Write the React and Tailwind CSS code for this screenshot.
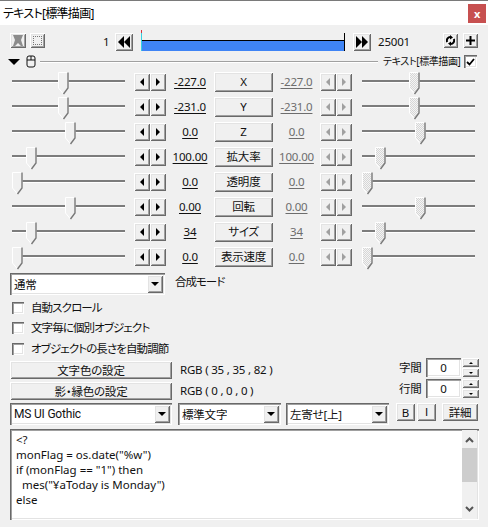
const raised = "bg-[#f0f0f0] shadow-[inset_1px_1px_0_#ffffff,inset_-1px_-1px_0_#696969,inset_2px_2px_0_#e3e3e3,inset_-2px_-2px_0_#a0a0a0]";
const sunken = "bg-white shadow-[inset_1px_1px_0_#696969,inset_2px_2px_0_#a0a0a0,inset_-1px_-1px_0_#ffffff,inset_-2px_-2px_0_#e3e3e3]";

function Tri({ dir, s = 5, color = "#000" }) {
  const pts = {
    left: `${s},0 ${s},${s * 2} 0,${s}`,
    right: `0,0 0,${s * 2} ${s},${s}`,
    down: `0,0 ${s * 2},0 ${s},${s}`,
    up: `0,${s} ${s * 2},${s} ${s},0`,
  }[dir];
  const w = dir === "left" || dir === "right" ? s : s * 2;
  const h = dir === "left" || dir === "right" ? s * 2 : s;
  return (
    <svg width={w} height={h} viewBox={`0 0 ${w} ${h}`} className="block">
      <polygon points={pts} fill={color} />
    </svg>
  );
}

function Spin({ off }) {
  const c = off ? "#a0a0a0" : "#000";
  return (
    <div className="flex h-[18px] w-[32px]">
      <div className={`flex w-[16px] items-center justify-center ${raised}`}><Tri dir="left" s={4} color={c} /></div>
      <div className={`flex w-[16px] items-center justify-center ${raised}`}><Tri dir="right" s={4} color={c} /></div>
    </div>
  );
}

function Slider({ at, off }) {
  return (
    <div className="relative h-[25px] w-[113px]">
      <div className="absolute left-0 right-0 top-[11px] h-[3px] border-b border-b-white bg-[#7c7c7c]" />
      <svg width="11" height="23" viewBox="0 0 11 23" className="absolute top-[3px]" style={{ left: at }}>
        <defs>
          <pattern id="dither" width="2" height="2" patternUnits="userSpaceOnUse">
            <rect width="2" height="2" fill="#f4f4f4" />
            <rect width="1" height="1" fill="#d6d6d6" />
            <rect x="1" y="1" width="1" height="1" fill="#d6d6d6" />
          </pattern>
        </defs>
        <path d="M.5.5H10V16L5.5 22 .5 16Z" fill={off ? "url(#dither)" : "#f0f0f0"} stroke="#fff" />
        <path d="M10 .5V16L5.5 22" fill="none" stroke="#777" strokeWidth="1.4" />
      </svg>
    </div>
  );
}

const rows = [
  ["-227.0", "X", "-227.0", 46, 47],
  ["-231.0", "Y", "-231.0", 46, 47],
  ["0.0", "Z", "0.0", 53, 53],
  ["100.00", "拡大率", "100.00", 14, 13],
  ["0.0", "透明度", "0.0", 0, 0],
  ["0.00", "回転", "0.00", 53, 53],
  ["34", "サイズ", "34", 14, 13],
  ["0.0", "表示速度", "0.0", 0, 0],
];

function Select({ w, text, font = "" }) {
  return (
    <div className={`flex h-[22px] items-center justify-between pl-[4px] pr-[2px] ${sunken} ${w}`}>
      <span className={`truncate ${font}`}>{text}</span>
      <div className={`flex h-[18px] w-[16px] items-center justify-center ${raised}`}><Tri dir="down" s={4} /></div>
    </div>
  );
}

function Check({ label, mt }) {
  return (
    <div className={`flex items-center pl-[12px] ${mt}`}>
      <div className={`h-[12px] w-[12px] ${sunken}`} />
      <span className="ml-[7px] tracking-[-0.9px]">{label}</span>
    </div>
  );
}

function NumBox() {
  return (
    <div className="ml-[5px] flex h-[19px]">
      <div className={`flex w-[35px] items-center justify-center ${sunken}`}>0</div>
      <div className="ml-[1px] flex w-[17px] flex-col">
        <div className={`flex h-[9px] items-center justify-center ${raised}`}><Tri dir="up" s={2} /></div>
        <div className={`mt-[1px] flex h-[9px] items-center justify-center ${raised}`}><Tri dir="down" s={2} /></div>
      </div>
    </div>
  );
}

export default function App() {
  return (
    <div className="h-[527px] w-[488px] overflow-hidden bg-[#f0f0f0] text-[11.5px] leading-[15px] tracking-[-0.2px] text-[#111] [font-feature-settings:'palt'] font-['Noto_Sans','Noto_Sans_CJK_JP',sans-serif]">
      <div className="flex h-[25px] items-center justify-between border-t border-[#7a7a7a] bg-white pl-[3px] pr-[2px]">
        <span className="text-[12px] tracking-[-0.7px] text-black">テキスト[標準描画]</span>
        <div className="flex h-[19px] w-[18px] items-center justify-center bg-[#c75050] text-[11px] font-bold text-white">x</div>
      </div>

      <div className="mt-[8px] flex h-[18px] items-start">
        <div className={`ml-[10px] flex h-[15px] w-[16px] items-center justify-center ${raised}`}>
          <svg width="12" height="11" viewBox="0 0 12 11"><path d="M1 0H11L9 5 11 11H9L6 8 3 11H1L3 5Z" fill="#8c8c8c" /></svg>
        </div>
        <div className={`ml-[4px] flex h-[15px] w-[15px] items-center justify-center ${raised}`}>
          <div className="h-[9px] w-[9px] border border-dotted border-[#777]" />
        </div>
        <span className="ml-[58px] mt-[1px] w-[5px]">1</span>
        <div className={`ml-[7px] flex h-[18px] w-[18px] items-center justify-center ${raised}`}>
          <Tri dir="left" s={6} /><Tri dir="left" s={6} />
        </div>
        <div className="relative ml-[8px] h-[18px] w-[204px] border-r border-black">
          <div className="mt-[7px] h-[11px] border-t border-black bg-[#3f84f5]" />
          <div className="absolute left-0 top-0 h-[18px] w-[1px] bg-[#35d0e0]" />
          <div className="absolute left-0 top-[-3px] h-[3px] w-[1px] bg-[#d8323c]" />
        </div>
        <div className={`ml-[8px] flex h-[18px] w-[18px] items-center justify-center ${raised}`}>
          <Tri dir="right" s={6} /><Tri dir="right" s={6} />
        </div>
        <span className="ml-[7px] mt-[1px] w-[65px]">25001</span>
        <div className={`flex h-[15px] w-[15px] items-center justify-center ${raised}`}>
          <svg width="9" height="11" viewBox="0 0 9 11">
            <path d="M1.2 7A3.4 3.4 0 0 1 5 2.2M7.8 4A3.4 3.4 0 0 1 4 8.8" fill="none" stroke="#000" strokeWidth="2" />
            <path d="M4 0L7 2.4 4 4.6ZM5 6.4L2 8.6 5 11Z" fill="#000" />
          </svg>
        </div>
        <div className={`ml-[5px] flex h-[15px] w-[15px] items-center justify-center ${raised}`}>
          <svg width="9" height="9" viewBox="0 0 9 9"><path d="M3.5 0H5.5V3.5H9V5.5H5.5V9H3.5V5.5H0V3.5H3.5Z" fill="#000" /></svg>
        </div>
      </div>

      <div className="mt-[3px] flex h-[15px] items-center">
        <div className="ml-[8px]"><Tri dir="down" s={6} /></div>
        <svg width="10" height="13" viewBox="0 0 10 13" className="ml-[6px]">
          <path d="M1 5V10Q1 12 3 12H7Q9 12 9 10V5ZM1 5V3Q1 1 3 1H7Q9 1 9 3V5M5 1V5" fill="none" stroke="#111" />
        </svg>
        <div className="ml-[4px] h-[2px] w-[338px] border-t border-b border-t-[#a0a0a0] border-b-white" />
        <span className="ml-[5px] w-[81px] whitespace-nowrap text-[10px] tracking-[-0.4px]">テキスト[標準描画]</span>
        <div className={`flex h-[13px] w-[13px] items-center justify-center ${sunken}`}>
          <svg width="9" height="8" viewBox="0 0 9 8"><path d="M1 4L3.5 6.5 8 1" fill="none" stroke="#000" strokeWidth="1.8" /></svg>
        </div>
      </div>

      <div className="flex flex-col">
        {rows.map(([a, label, b, l, r]) => (
          <div key={label} className="flex h-[25px] items-center pl-[12px]">
            <Slider at={l} />
            <div className="ml-[9px]"><Spin /></div>
            <span className="w-[48px] text-center underline underline-offset-2">{a}</span>
            <div className={`flex h-[20px] w-[59px] items-center justify-center ${raised}`}>{label}</div>
            <span className="w-[47px] text-center text-[#6d6d6d] underline underline-offset-2">{b}</span>
            <Spin off />
            <div className="ml-[10px]"><Slider at={r} off /></div>
          </div>
        ))}
      </div>

      <div className="mt-[4px] flex items-center pl-[10px]">
        <Select w="w-[155px]" text="通常" />
        <span className="mb-[5px] ml-[10px] tracking-[-1px]">合成モード</span>
      </div>

      <Check label="自動スクロール" mt="mt-[5px]" />
      <Check label="文字毎に個別オブジェクト" mt="mt-[5px]" />
      <Check label="オブジェクトの長さを自動調節" mt="mt-[6px]" />

      <div className="mt-[2px] flex h-[42px] pl-[10px]">
        <div className="flex w-[389px] flex-col pt-[3px]">
          <div className="flex h-[18px] items-center">
            <div className={`flex h-[18px] w-[162px] items-center justify-center ${raised}`}>文字色の設定</div>
            <span className="mb-[2px] ml-[8px]">RGB ( 35 , 35 , 82 )</span>
          </div>
          <div className="mt-[3px] flex h-[18px] items-center">
            <div className={`flex h-[18px] w-[162px] items-center justify-center ${raised}`}>影・縁色の設定</div>
            <span className="mb-[2px] ml-[8px]">RGB ( 0 , 0 , 0 )</span>
          </div>
        </div>
        <div className="flex flex-col">
          <div className="flex h-[19px] items-center"><span className="w-[22px] whitespace-nowrap">字間</span><NumBox /></div>
          <div className="mt-[2px] flex h-[19px] items-center"><span className="w-[22px] whitespace-nowrap">行間</span><NumBox /></div>
        </div>
      </div>

      <div className="mt-[3px] flex h-[22px] items-start pl-[10px]">
        <Select w="w-[162px]" text="MS UI Gothic" font="font-['Roboto',sans-serif] text-[12px]" />
        <div className="ml-[6px]"><Select w="w-[103px]" text="標準文字" /></div>
        <div className="ml-[5px]"><Select w="w-[103px]" text="左寄せ[上]" /></div>
        <div className={`ml-[7px] flex h-[18px] w-[19px] items-center justify-center ${raised}`}>B</div>
        <div className={`ml-[2px] flex h-[18px] w-[19px] items-center justify-center font-['Liberation_Sans',sans-serif] ${raised}`}>I</div>
        <div className={`ml-[6px] flex h-[18px] w-[36px] items-center justify-center ${raised}`}>詳細</div>
      </div>

      <div className={`ml-[10px] mt-[4px] flex h-[91px] w-[469px] ${sunken}`}>
        <pre className="flex-1 pl-[6px] pt-[3px] font-['Noto_Sans','Noto_Sans_CJK_JP',sans-serif] text-[11.5px] leading-[15px] tracking-normal text-[#111]">{`<?
monFlag = os.date("%w")
if (monFlag == "1") then
  mes("¥aToday is Monday")
else`}</pre>
        <div className="my-[1px] mr-[2px] flex w-[15px] flex-col items-center bg-[#f0f0f0]">
          <svg width="9" height="6" viewBox="0 0 9 6" className="mt-[7px]"><path d="M1 5L4.5 1.5 8 5" fill="none" stroke="#555" strokeWidth="2" /></svg>
          <div className="mt-[5px] h-[34px] w-full bg-[#cdcdcd]" />
          <div className="flex-1" />
          <svg width="9" height="6" viewBox="0 0 9 6" className="mb-[7px]"><path d="M1 1L4.5 4.5 8 1" fill="none" stroke="#555" strokeWidth="2" /></svg>
        </div>
      </div>
    </div>
  );
}
